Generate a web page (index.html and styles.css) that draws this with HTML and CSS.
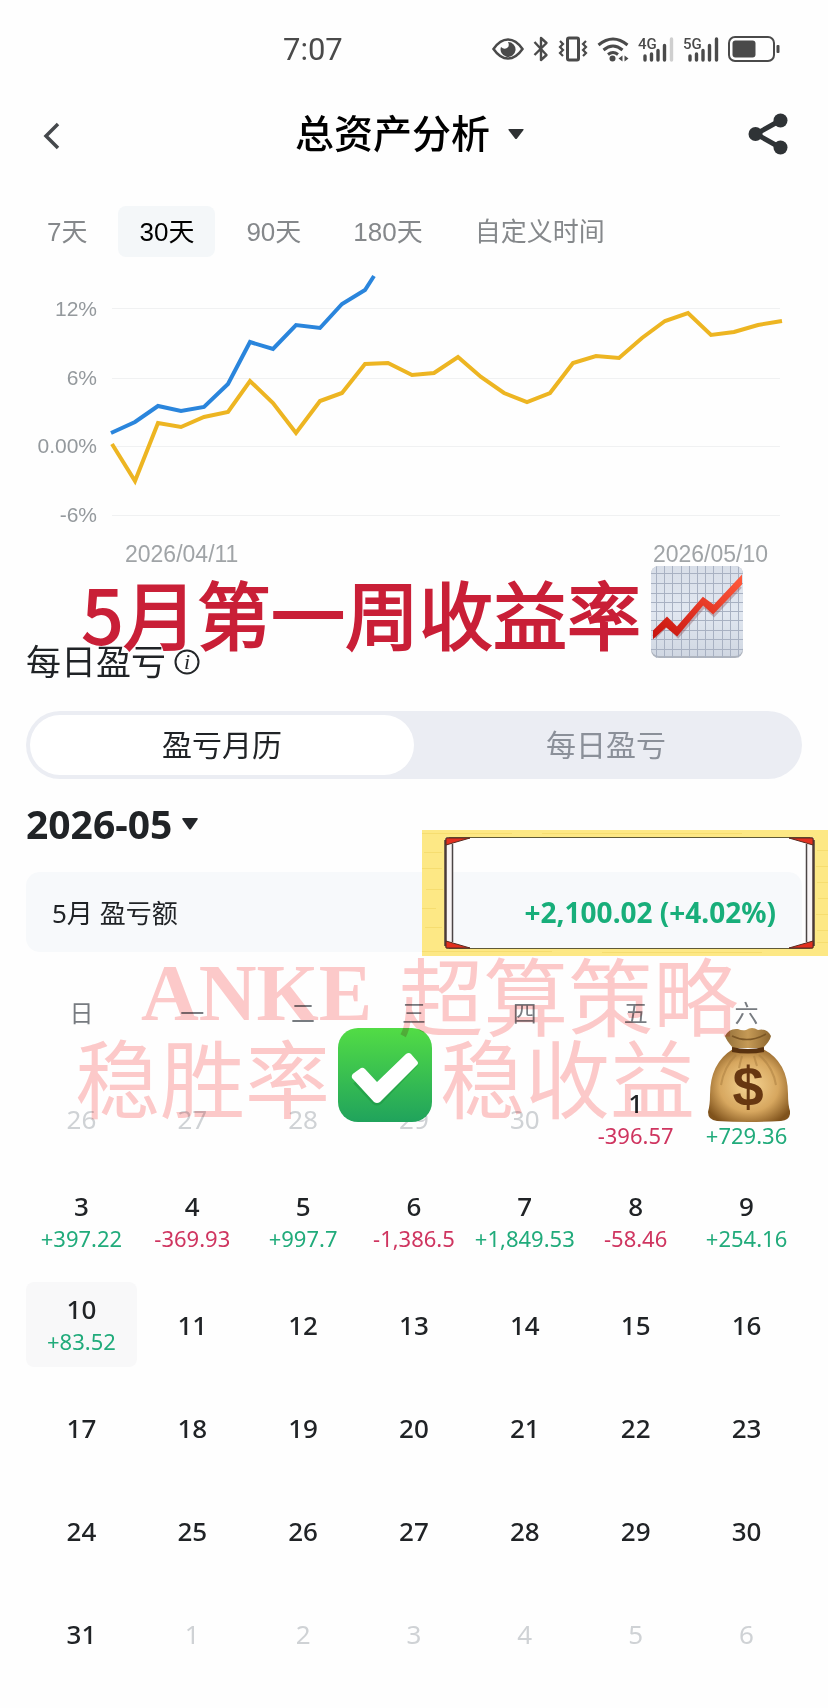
FILE: index.html
```html
<!DOCTYPE html>
<html lang="zh-CN">
<head>
    <meta charset="UTF-8">
    <meta name="viewport" content="width=device-width, initial-scale=1.0">
    <title>总资产分析</title>

    <link rel="stylesheet" href="styles.css">
</head>
<body>
    <div class="statusBar">
        <span class="time">7:07</span>
        <div class="statusIcons">
            <svg width="32" height="26" viewBox="0 0 32 26">
                <path d="M1.5 13Q8 3.5 16 3.5T30.500 13Q24 22.500 16 22.500T1.500 13Z" fill="none" stroke="#4a4a4a" stroke-width="2.500"/>
                <path d="M16 6a7.500 7.500 0 1 1-7 5q3 3 6 1t1-6z" fill="#4a4a4a"/>
            </svg>
            <svg width="16" height="26" viewBox="0 0 16 26">
                <path d="M1.500 6l12 13L8 24V2l5.500 5L1.500 19" fill="none" stroke="#4a4a4a" stroke-width="2.400" stroke-linejoin="round"/>
            </svg>
            <svg width="30" height="26" viewBox="0 0 30 26" fill="none" stroke="#4a4a4a">
                <rect x="9.500" y="2" width="11" height="22" rx="1.500" stroke-width="3"/>
                <path d="M2 5l3 3-3 3 3 3-3 3 3 3M28 5l-3 3 3 3-3 3 3 3-3 3" stroke-width="2.200"/>
            </svg>
            <svg width="32" height="26" viewBox="0 0 32 26">
                <path d="M1.500 9q14.500-12 29 0M6.500 14q9.500-8 19 0M11 18.500q5-4 10 0" fill="none" stroke="#4a4a4a" stroke-width="3"/>
                <circle cx="15.500" cy="22.500" r="3" fill="#4a4a4a"/>
                <path d="M25.500 19.500v6l-4-3zM27.500 19.500v6l4-3z" fill="#4a4a4a"/>
            </svg>
            <svg width="36" height="26" viewBox="0 0 36 26">
                <text x="0" y="13" class="net">4G</text>
                <path d="M7 20v4M13.500 18v6M20 14.500v9.500M26.500 9.500v14.500" stroke="#4a4a4a" stroke-width="3.400" stroke-linecap="round"/>
                <path d="M33.500 3v21" stroke="#cfcfcf" stroke-width="3.400" stroke-linecap="round"/>
            </svg>
            <svg width="36" height="26" viewBox="0 0 36 26">
                <text x="0" y="13" class="net">5G</text>
                <path d="M7 20v4M13.500 18v6M20 14.500v9.500M26.500 9.500v14.500M33.500 3v21" stroke="#4a4a4a" stroke-width="3.400" stroke-linecap="round"/>
            </svg>
            <svg width="52" height="26" viewBox="0 0 52 26">
                <rect x="1" y="1" width="45" height="24" rx="6" fill="none" stroke="#4a4a4a" stroke-width="2"/>
                <rect x="4.500" y="4.500" width="23" height="17" rx="3" fill="#4a4a4a"/>
                <rect x="48.500" y="9" width="3" height="8" rx="1" fill="#4a4a4a"/>
            </svg>
        </div>
    </div>

    <header class="topBar">
        <button class="back" aria-label="返回">
            <svg width="18" height="30" viewBox="0 0 18 30"><path d="M16 3L4 15l12 12" fill="none" stroke="#45484c" stroke-width="3.500"/></svg>
        </button>
        <div class="pick">
            <select class="title" aria-label="分析类型">
                <option>总资产分析</option>
            </select>
            <svg width="18" height="16" viewBox="0 0 18 16"><path d="M2 5h14q1 0 .5 1L10 14.500q-1 1-2 0L1.500 6Q1 5 2 5z" fill="#2e3133"/></svg>
        </div>
        <button class="share" aria-label="分享">
            <svg width="40" height="42" viewBox="0 0 40 42" fill="#2f3336">
                <path d="M33 7L8 21l25 14" fill="none" stroke="#2f3336" stroke-width="5"/>
                <circle cx="32.500" cy="7.500" r="7"/><circle cx="7.500" cy="21" r="7"/><circle cx="32.500" cy="34.500" r="7"/>
            </svg>
        </button>
    </header>

    <main>
        <nav class="ranges">
            <button>7天</button>
            <button class="active">30天</button>
            <button>90天</button>
            <button>180天</button>
            <button>自定义时间</button>
        </nav>

        <svg class="chart" viewBox="0 0 828 316">
            <g class="grid">
                <path d="M112 51.500H780M112 121.500H780M112 189.500H780M112 258.500H780"/>
            </g>
            <g class="axis">
                <text x="97" y="59" text-anchor="end">12%</text>
                <text x="97" y="128" text-anchor="end">6%</text>
                <text x="97" y="196" text-anchor="end">0.00%</text>
                <text x="97" y="265" text-anchor="end">-6%</text>
            </g>
            <g class="dates">
                <text x="125" y="305">2026/04/11</text>
                <text x="768" y="305" text-anchor="end">2026/05/10</text>
            </g>
            <polyline class="line yellow" points="112,187 135,224 158,166 181,170 204,160 228,155 250,124 273,146 296,176 320,144 342,136 365,107 388,106 412,118 434,116 458,100 481,120 504,136 527,145 550,136 573,106 596,99 619,101 642,81 665,64 688,56 711,78 734,75 758,68 782,64"/>
            <polyline class="line blue" points="111,176 135,165 158,149 181,154 204,150 228,127 250,85 273,92 296,68 320,71 342,47 365,33 374,19"/>
        </svg>

        <section class="daily">
            <div class="banner">
                <span>5月第一周收益率</span>
                <svg width="92" height="92" viewBox="0 0 92 92">
                    <defs>
                        <linearGradient id="paper" x1="0" y1="0" x2="0" y2="1"><stop offset="0" stop-color="#d8dee8"/><stop offset=".5" stop-color="#e2e8f1"/><stop offset="1" stop-color="#d0d7e2"/></linearGradient>
                        <linearGradient id="trend" x1="0" y1="1" x2="1" y2="0"><stop offset="0" stop-color="#c8140f"/><stop offset="1" stop-color="#ff5a3c"/></linearGradient>
                        <clipPath id="sheet"><rect width="92" height="92" rx="8"/></clipPath>
                    </defs>
                    <rect width="92" height="92" rx="8" fill="#aeb4be"/>
                    <rect width="92" height="90" rx="8" fill="url(#paper)"/>
                    <path clip-path="url(#sheet)" d="M0 7.500h92M0 17.500h92M0 27.500h92M0 36.500h92M0 45.500h92M0 54.500h92M0 64.500h92M0 73.500h92M0 83.500h92M5.500 0v92M13.500 0v92M21.500 0v92M30.500 0v92M38.500 0v92M46.500 0v92M54.500 0v92M62.500 0v92M71.500 0v92M79.500 0v92M87.500 0v92" stroke="#a8b1c2" stroke-width="1"/>
                    <path d="M3 71l13-13 11 11 26-30 10 9 26-28" fill="none" stroke="#8a5a64" stroke-opacity=".4" stroke-width="5"/>
                    <path d="M3 65L16 52l10 10L52 32l11 8 27-29v7L62 47l-10-9-26 31-11-9L3 71z" fill="url(#trend)" stroke="url(#trend)" stroke-width="2"/>
                </svg>
            </div>
            <h2>每日盈亏
                <svg width="26" height="26" viewBox="0 0 26 26"><circle cx="13" cy="13" r="11.500" fill="none" stroke="#222528" stroke-width="2"/><text x="13" y="20" text-anchor="middle" class="info">i</text></svg>
            </h2>

            <div class="segment">
                <button class="active">盈亏月历</button>
                <button>每日盈亏</button>
            </div>

            <div class="pick month">
                <select aria-label="月份">
                    <option>2026-05</option>
                </select>
                <svg width="18" height="14" viewBox="0 0 18 14"><path d="M2 1h14q1.500 0 .5 1.500L10 12q-1 1-2 0L1.500 2.500Q.5 1 2 1z" fill="#24262a"/></svg>
            </div>

            <div class="total">
                <span>5月 盈亏额</span>
                <strong>+2,100.02 (+4.02%)</strong>
                <svg class="frame" width="406" height="126" viewBox="0 0 406 126">
                    <path d="M0 0h406v126H0zM26 7q-3 0-3 3v105q0 3 3 3h363q3 0 3-3V10q0-3-3-3z" fill="#fde885" fill-rule="evenodd"/>
                    <path d="M0 3.500h90M120 3.500h200M2 22.500h18M0 38.500h20M4 59.500h17M0 78.500h14M3 97.500h17M0 121.500h130M180 122.500h160M395 20.500h11M394 36.500h12M395 52.500h11M396 68.500h10M394 84.500h12M395 100.500h11M395 112.500h11" stroke="#f6dd70" fill="none"/>
                    <path d="M25 8h6v110h-6zM385 8h6v110h-6z" fill="#f9f5f5"/>
                    <rect x="23.500" y="7.500" width="368" height="111" rx="3" fill="none" stroke="#5f5a38"/>
                    <path d="M23.500 10v106M391.500 10v106" stroke="#4b3b38" stroke-width="2.500"/>
                    <path d="M30.500 14v98M384.500 14v98" stroke="#4b4545" stroke-width="1.500"/>
                    <path d="M24 8h24l-24 7zM391 8h-24l24 7zM24 118h24l-24-7zM391 118h-24l24-7z" fill="#e2301f" stroke="#5a2b20"/>
                </svg>
            </div>

            <div class="calendarWrap">
                <table class="calendar">
                    <thead>
                        <tr><th>日</th><th>一</th><th>二</th><th>三</th><th>四</th><th>五</th><th>六</th></tr>
                    </thead>
                    <tbody>
                        <tr>
                            <td class="other">26</td><td class="other">27</td><td class="other">28</td><td class="other">29</td><td class="other">30</td>
                            <td>1<span class="down">-396.57</span></td>
                            <td>2<span class="up">+729.36</span></td>
                        </tr>
                        <tr>
                            <td>3<span class="up">+397.22</span></td>
                            <td>4<span class="down">-369.93</span></td>
                            <td>5<span class="up">+997.7</span></td>
                            <td>6<span class="down">-1,386.5</span></td>
                            <td>7<span class="up">+1,849.53</span></td>
                            <td>8<span class="down">-58.46</span></td>
                            <td>9<span class="up">+254.16</span></td>
                        </tr>
                        <tr>
                            <td class="today">10<span class="up">+83.52</span></td>
                            <td>11</td><td>12</td><td>13</td><td>14</td><td>15</td><td>16</td>
                        </tr>
                        <tr><td>17</td><td>18</td><td>19</td><td>20</td><td>21</td><td>22</td><td>23</td></tr>
                        <tr><td>24</td><td>25</td><td>26</td><td>27</td><td>28</td><td>29</td><td>30</td></tr>
                        <tr>
                            <td>31</td>
                            <td class="other">1</td><td class="other">2</td><td class="other">3</td><td class="other">4</td><td class="other">5</td><td class="other">6</td>
                        </tr>
                    </tbody>
                </table>

                <div class="stamp">
                    <div class="stampRow first"><span class="latin">ANKE</span><span>超算策略</span></div>
                    <div class="stampRow">
                        <span>稳胜率</span>
                        <svg width="94" height="94" viewBox="0 0 94 94">
                            <defs><linearGradient id="green" x1="0" y1="0" x2="0" y2="1"><stop offset="0" stop-color="#52dc45"/><stop offset="1" stop-color="#20a35c"/></linearGradient></defs>
                            <rect width="94" height="94" rx="20" fill="url(#green)"/>
                            <path d="M20 49l19 20 36-38" fill="none" stroke="#178c3c" stroke-opacity=".4" stroke-width="13" stroke-linejoin="round" transform="translate(0 2)"/>
                            <path d="M16 45l7-5q2-1 4 1l12 13 29-28q3-2 5 0l6 7q2 2 0 4L42 74q-3 2-6 0L14 50q-1-3 2-5z" fill="#fff"/>
                        </svg>
                        <span>稳收益</span>
                        <svg class="bag" width="82" height="94" viewBox="0 0 82 94">
                            <defs>
                                <radialGradient id="sack" cx=".5" cy=".5" r=".6"><stop offset="0" stop-color="#f6d594"/><stop offset=".6" stop-color="#d7a75f"/><stop offset="1" stop-color="#80531c"/></radialGradient>
                                <linearGradient id="neck" x1="0" y1="0" x2="1" y2="0"><stop offset="0" stop-color="#94703a"/><stop offset=".5" stop-color="#c59a56"/><stop offset="1" stop-color="#8d662f"/></linearGradient>
                            </defs>
                            <path d="M25 20Q18 12 17 8q4-8 13-7 4 2 8 1 6-4 12 0 9-2 13 6-1 5-8 12z" fill="url(#neck)"/>
                            <path d="M24 8q16 8 34-2" fill="none" stroke="#7c5725" stroke-width="1.500"/>
                            <path d="M25 21h30q25 13 25 45 0 11 2 17 1 9-9 10-33 2-64 0-9-1-9-9 2-7 2-17 0-32 23-46z" fill="url(#sack)"/>
                            <path d="M24 19q16 4 32 0v5q-16 3-32 0z" fill="#59320f"/>
                            <path d="M28 27q-12 12-15 30M34 28q-2 7-3 12M51 27q14 12 17 30M46 28q2 7 3 10" fill="none" stroke="#a87b3e" stroke-opacity=".5" stroke-width="2"/>
                            <text x="40" y="78" text-anchor="middle">$</text>
                        </svg>
                    </div>
                </div>
            </div>
        </section>
    </main>
</body>
</html>
```
FILE: styles.css
```css
*{
    margin: 0;
    padding: 0;
    box-sizing: border-box;
}
body{
    background-color: #fefefe;
    color: #202326;
    font-family: "Noto Sans", "Noto Sans CJK SC", sans-serif;
}
button, select{
    border: none;
    background: none;
    color: inherit;
    font: inherit;
    cursor: pointer;
}
select{
    appearance: none;
}
svg{
    display: block;
    flex: none;
}
.statusBar{
    height: 98px;
    padding: 0 48px 0 283px;
    display: flex;
    justify-content: space-between;
    align-items: center;
}
.time{
    font-family: Roboto, sans-serif;
    font-size: 31px;
    color: #4a4a4a;
}
.statusIcons{
    display: flex;
    gap: 9px;
}
.net{
    font-family: Roboto, sans-serif;
    font-size: 15px;
    font-weight: 500;
    fill: #4a4a4a;
}
.topBar{
    height: 68px;
    padding: 0 40px 0 42px;
    display: flex;
    justify-content: space-between;
    align-items: center;
}
.back{
    width: 30px;
    padding-top: 8px;
}
.share{
    padding-top: 4px;
}
.pick{
    display: flex;
    align-items: center;
    gap: 16px;
}
.title{
    font-size: 39px;
    font-weight: 500;
    color: #000;
}
main{
    padding: 40px 26px 28px;
}
.ranges{
    display: flex;
    gap: 10px;
    font-family: "Liberation Sans", "Noto Sans CJK SC", sans-serif;
    font-size: 26px;
    color: #85888b;
}
.ranges button{
    height: 51px;
    padding: 0 21px;
    border-radius: 8px;
    line-height: 48px;
    white-space: nowrap;
}
.ranges .active{
    background-color: #f4f7f9;
    color: #000;
}
.chart{
    width: calc(100% + 52px);
    margin: 0 -26px;
    font-family: "Liberation Sans", sans-serif;
}
.grid{
    stroke: #f0f1f2;
}
.axis{
    font-size: 21px;
    fill: #94999d;
}
.dates{
    font-size: 23px;
    fill: #a0a4a7;
}
.line{
    fill: none;
    stroke-width: 4;
}
.yellow{
    stroke: #edb522;
}
.blue{
    stroke: #2a85dc;
}
.daily{
    position: relative;
    padding-top: 67px;
}
/* sticker text laid over the heading */
.banner{
    position: absolute;
    top: -7px;
    left: 56px;
    display: flex;
    align-items: center;
    gap: 10px;
    font-family: "Noto Sans CJK SC", sans-serif;
    font-size: 74px;
    line-height: 92px;
    color: #c91f37;
    white-space: nowrap;
    -webkit-text-stroke: 2px #c91f37;
}
h2{
    display: flex;
    align-items: center;
    gap: 8px;
    font-size: 35px;
    font-weight: 400;
    line-height: 44px;
}
.info{
    font: italic 22px "Liberation Serif", serif;
    fill: #222528;
}
.segment{
    height: 68px;
    margin-top: 27px;
    padding: 4px;
    display: flex;
    border-radius: 34px;
    background-color: #ebedf3;
    font-size: 30px;
}
.segment button{
    flex: 1;
    padding-bottom: 4px;
    border-radius: 30px;
    color: #8b9099;
}
.segment .active{
    background-color: #fff;
    color: #202326;
}
.month{
    height: 44px;
    margin-top: 23px;
    gap: 8px;
    font-size: 39px;
    font-weight: 700;
}
.month select{
    height: 44px;
    line-height: 44px;
}
.total{
    position: relative;
    height: 80px;
    margin-top: 26px;
    padding: 0 26px;
    display: flex;
    justify-content: space-between;
    align-items: center;
    border-radius: 14px;
    background-color: #f7f9fb;
    font-size: 26px;
}
.total strong{
    font-size: 28px;
    color: #18ae7a;
}
.frame{
    position: absolute;
    top: -42px;
    right: -26px;
}
.calendarWrap{
    position: relative;
}
.calendar{
    width: 100%;
    table-layout: fixed;
    border-collapse: separate;
    border-spacing: 0 18px;
    text-align: center;
}
.calendar th{
    height: 88px;
    padding-bottom: 6px;
    font-size: 24px;
    font-weight: 400;
    color: #777b80;
}
.calendar td{
    height: 85px;
    font-size: 26px;
    font-weight: 500;
    line-height: 32px;
    border-radius: 8px;
}
.calendar td span{
    display: block;
    font-size: 22px;
    font-weight: 400;
}
.calendar .other{
    font-weight: 400;
    color: #cfd2d5;
}
.calendar .today{
    background-color: #f8f8f9;
}
.up{
    color: #21ab7b;
}
.down{
    color: #cf3560;
}
.stamp{
    position: absolute;
    top: 0;
    left: 49px;
    font-family: "Noto Sans CJK SC", sans-serif;
    font-size: 85px;
    font-weight: 400;
    line-height: 94px;
    color: #fdcaca;
    white-space: nowrap;
}
.stamp span{
    mix-blend-mode: multiply;
}
.stampRow{
    display: flex;
    gap: 8px;
}
.stampRow.first{
    height: 76px;
    padding-left: 66px;
    gap: 26px;
    line-height: 82px;
}
.latin{
    font-family: "Liberation Serif", serif;
    font-size: 80px;
    font-weight: 700;
}
.bag{
    margin-left: 5px;
}
.bag text{
    font: bold 56px "Liberation Sans", sans-serif;
    fill: #673711;
}
```
